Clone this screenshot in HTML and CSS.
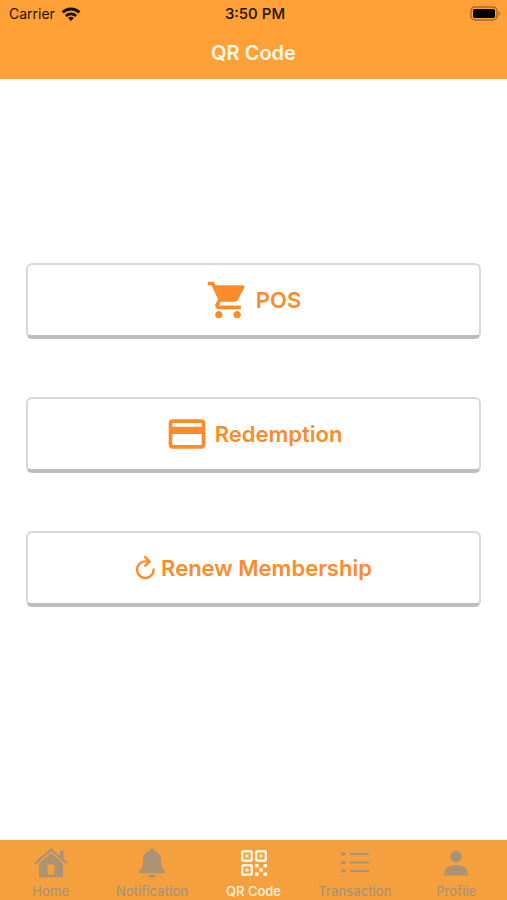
FILE: index.html
```html
<!DOCTYPE html>
<html lang="en">
<head>
    <meta charset="UTF-8">
    <meta name="viewport" content="width=device-width, initial-scale=1.0">
    <title>QR Code</title>
    <link rel="stylesheet" href="styles.css">
</head>
<body>
    <header class="header">
        <div class="status-bar">
            <div class="carrier">
                <span>Carrier</span>
                <svg width="20" height="14" viewBox="0 0 20 14" fill="none" stroke="#1a0f00" stroke-width="3">
                    <path d="M1.6 5.4a12 12 0 0 1 16.8 0"/>
                    <path d="M4.9 9a7.3 7.3 0 0 1 10.2 0" stroke-width="2.6"/>
                    <path d="M10 14L7.1 11.1a4.1 4.1 0 0 1 5.8 0z" fill="#1a0f00" stroke="none"/>
                </svg>
            </div>
            <span class="time">3:50 PM</span>
            <div class="battery">
                <svg width="32" height="15" viewBox="0 0 32 15">
                    <rect x="2" y="1" width="26" height="13" rx="4" fill="none" stroke="#a86a24" stroke-width="1.4"/>
                    <rect x="4" y="3" width="22" height="9" rx="1.5" fill="#000"/>
                    <path d="M29.5 5.3c2.2.8 2.2 3.6 0 4.4z" fill="#a86a24"/>
                </svg>
            </div>
        </div>
        <h1 class="title">QR Code</h1>
    </header>

    <main class="content">
        <button type="button" class="action">
            <svg class="action-icon" viewBox="0 0 24 24" fill="currentColor">
                <path d="M7 18c-1.100 0-1.990.9-1.990 2S5.900 22 7 22s2-.9 2-2-.9-2-2-2zM1 2v2h2l3.600 7.590-1.350 2.450c-.16.28-.25.61-.25.96 0 1.100.9 2 2 2h12v-2H7.420c-.14 0-.25-.11-.25-.25l.03-.12.9-1.630h7.450c.75 0 1.410-.41 1.750-1.030l3.580-6.490A1 1 0 0 0 20 4H5.210l-.94-2H1zm16 16c-1.100 0-1.990.9-1.990 2s.89 2 1.990 2 2-.9 2-2-.9-2-2-2z"/>
            </svg>
            <span>POS</span>
        </button>
        <button type="button" class="action">
            <svg class="action-icon" viewBox="0 0 24 24" fill="currentColor">
                <path d="M20 4H4c-1.110 0-1.990.89-1.990 2L2 18c0 1.110.89 2 2 2h16c1.110 0 2-.89 2-2V6c0-1.110-.89-2-2-2zm0 14H4v-6h16v6zm0-10H4V6h16v2z"/>
            </svg>
            <span>Redemption</span>
        </button>
        <button type="button" class="action">
            <svg class="action-icon small" viewBox="0 0 20 26" fill="none" stroke="currentColor" stroke-width="2.400">
                <path d="M18.500 13.500A8.300 8.300 0 1 1 10.200 6.400H14"/>
                <path d="M9.500 1.400L14.500 6.400L9.500 11.400"/>
            </svg>
            <span>Renew Membership</span>
        </button>
    </main>

    <nav class="tab-bar">
        <a href="#home" class="tab">
            <svg class="tab-icon" viewBox="0 0 34 32" fill="currentColor">
                <path d="M17 1L.5 15.500l1.500 1.700L17 4.200l15 13 1.500-1.700L29.500 12V3.500h-3.600v5.300z"/>
                <path d="M17 6L5 16.400V29c0 .8.500 1.300 1.300 1.300h21.400c.8 0 1.300-.5 1.300-1.300V16.400zM13.500 17.500h7v10h-7z" fill-rule="evenodd"/>
            </svg>
            <span>Home</span>
        </a>
        <a href="#notification" class="tab">
            <svg class="tab-icon" viewBox="0 0 34 32" fill="currentColor">
                <path d="M17 1.500c-1.500 0-2.500 1-2.500 2.300C10.300 5 8.200 8.200 8.200 12.500c0 6.500-1.200 9-4.200 11.500v2.300h26V24c-3-2.500-4.200-5-4.200-11.500 0-4.300-2.100-7.500-6.300-8.700 0-1.300-1-2.300-2.500-2.300z"/>
                <path d="M13.500 28h7c-.5 2-1.800 3-3.500 3s-3-1-3.500-3z"/>
            </svg>
            <span>Notification</span>
        </a>
        <a href="#qr-code" class="tab active">
            <svg class="tab-icon" viewBox="0 0 34 32" fill="currentColor">
                <g fill="none" stroke="currentColor" stroke-width="2.400">
                    <rect x="5.200" y="4.200" width="9.600" height="9.600" rx="1.500"/>
                    <rect x="19.200" y="4.200" width="9.600" height="9.600" rx="1.500"/>
                    <rect x="5.200" y="18.200" width="9.600" height="9.600" rx="1.500"/>
                </g>
                <path d="M8.500 7.500h3v3h-3zM22.500 7.500h3v3h-3zM8.500 21.500h3v3h-3zM18 17h3.500v3.500H18zM26.500 17H30v3.500h-3.500zM22.300 21.300h3.400v3.400h-3.400zM18 25.500h3.500V29H18zM26.500 25.500H30V29h-3.500z"/>
            </svg>
            <span>QR Code</span>
        </a>
        <a href="#transaction" class="tab">
            <svg class="tab-icon" viewBox="0 0 34 32" fill="currentColor">
                <path d="M12 6h19v2H12zM12 14.500h19v2H12zM12 23h19v2H12z"/>
                <path d="M3 5.500h4.500v3H3zM3 14h4.500v3H3zM3 22.500h4.500v3H3z"/>
            </svg>
            <span>Transaction</span>
        </a>
        <a href="#profile" class="tab">
            <svg class="tab-icon" viewBox="0 0 34 32" fill="currentColor">
                <circle cx="17" cy="9.500" r="5.800"/>
                <path d="M5.200 28.500c0-6.500 4.500-10.500 11.800-10.500s11.800 4 11.800 10.500z"/>
            </svg>
            <span>Profile</span>
        </a>
    </nav>
</body>
</html>
```
FILE: styles.css
```css
body {
    font-family: Inter, "Liberation Sans", sans-serif;
    margin: 0;
    min-height: 100vh;
    display: flex;
    flex-direction: column;
    background-color: #fff;
}
.header {
    background-color: #ffa136;
    color: #1a0f00;
}
.status-bar {
    display: grid;
    grid-template-columns: 1fr auto 1fr;
    align-items: center;
    height: 27px;
    padding: 0 6px 0 9px;
    font-size: 14px;
}
.carrier {
    display: flex;
    align-items: center;
    gap: 6px;
}
.time {
    font-size: 15px;
    font-weight: 500;
}
.battery {
    display: flex;
    justify-content: flex-end;
}
.title {
    margin: 0;
    color: #fff8ea;
    font-size: 20px;
    font-weight: 600;
    line-height: 52px;
    text-align: center;
}
.content {
    flex: 1;
    display: flex;
    flex-direction: column;
    justify-content: center;
    gap: 58px;
    padding: 0 26px 50px;
}
.action {
    display: flex;
    align-items: center;
    justify-content: center;
    gap: 6px;
    height: 76px;
    padding: 0;
    border: 2px solid #d8d8d8;
    border-bottom: 4px solid #bdbdbd;
    border-radius: 6px;
    background-color: #fff;
    color: #fb8c2a;
    font-family: inherit;
    font-size: 22px;
    font-weight: 600;
    cursor: pointer;
}
.action-icon {
    width: 44px;
    height: 44px;
}
.action-icon.small {
    width: 20px;
    height: 26px;
}
/* Bottom tabs */
.tab-bar {
    display: flex;
    height: 60px;
    background-color: #f5a03f;
}
.tab {
    flex: 1 1 0;
    display: flex;
    flex-direction: column;
    align-items: center;
    gap: 4px;
    padding-top: 7px;
    color: #ab9273;
    font-size: 13px;
    font-weight: 500;
    line-height: 16px;
    text-decoration: none;
}
.tab.active {
    color: #fff4e2;
}
.tab-icon {
    width: 34px;
    height: 32px;
}
```
